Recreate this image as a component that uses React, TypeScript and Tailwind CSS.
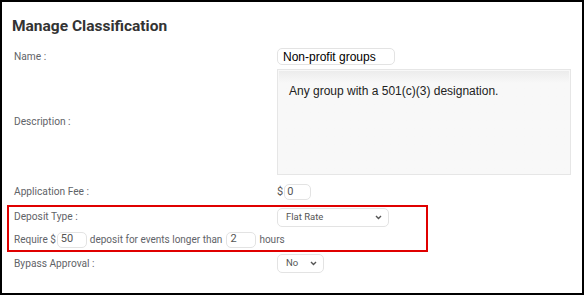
export default function App() {
  const label = "w-[263px] shrink-0 text-[10.2px] text-[#5f6368]";
  return (
    <div className="w-[584px] h-[295px] border-2 border-black bg-white overflow-hidden font-['Roboto',sans-serif]">
      <h1 className="pl-[10px] pt-[14px] text-[15.5px] font-bold text-[#333] leading-5">Manage Classification</h1>

      <div className="flex flex-col pl-[12px] mt-[12px]">
        {/* name */}
        <div className="flex items-center h-[17px]">
          <label className={label}>Name :</label>
          <input
            className="w-[118px] h-[17px] border border-[#e3e3e3] rounded-[5px] px-[5px] text-[12px] text-black font-['Liberation_Sans',Arial,sans-serif] outline-none"
            defaultValue="Non-profit groups"
          />
        </div>

        {/* description */}
        <div className="flex items-center mt-[4px]">
          <label className={label}>Description :</label>
          <div className="w-[294px] h-[106px] border border-[#e6e6e6] bg-[#f8f8f8] p-[1px]">
            <div className="w-full h-full bg-gradient-to-b from-[#ececec] to-[#f8f8f8] to-[12px] pt-[11px] pl-[10px] text-[12px] text-[#222] font-['Liberation_Sans',Arial,sans-serif]">
              Any group with a 501(c)(3) designation.
            </div>
          </div>
        </div>

        {/* application fee */}
        <div className="flex items-center mt-[9px] h-[16px]">
          <label className={label}>Application Fee :</label>
          <span className="text-[11px] text-[#555] mr-[1px]">$</span>
          <input
            className="w-[27px] h-[16px] border border-[#e3e3e3] rounded-[5px] px-[2px] text-[11px] text-[#555] outline-none"
            defaultValue="0"
          />
        </div>

        {/* deposit */}
        <div className="border-2 border-[#e00000] -ml-[7px] w-[421px] mt-[5px] h-[47px] pl-[5px]">
          <div className="flex items-center h-[20px]">
            <label className="w-[263px] shrink-0 text-[10.2px] text-[#5f6368]">Deposit Type :</label>
            <div className="relative w-[112px] h-[19px] border border-[#e3e3e3] rounded-[5px] text-[9.5px] text-[#555] flex items-center pl-[8px]">
              Flat Rate
              <svg className="absolute right-[6px] top-[6px]" width="7" height="5" viewBox="0 0 7 5">
                <path d="M1 1 L3.5 3.5 L6 1" stroke="#555" strokeWidth="1.4" fill="none" />
              </svg>
            </div>
          </div>
          <div className="flex items-center mt-[4px] text-[10px] text-[#5f6368] h-[17px]">
            <span>Require $</span>
            <input
              className="w-[30px] h-[16px] ml-[1px] border border-[#e3e3e3] rounded-[5px] px-[3px] text-[11px] text-[#555] outline-none"
              defaultValue="50"
            />
            <span className="ml-[3px]">deposit for events longer than</span>
            <input
              className="w-[30px] h-[16px] ml-[4px] border border-[#e3e3e3] rounded-[5px] px-[3px] text-[11px] text-[#555] outline-none"
              defaultValue="2"
            />
            <span className="ml-[3px]">hours</span>
          </div>
        </div>

        {/* bypass */}
        <div className="flex items-center mt-[2px] h-[19px]">
          <label className={label}>Bypass Approval :</label>
          <div className="relative w-[47px] h-[19px] border border-[#e3e3e3] rounded-[5px] text-[9.5px] text-[#555] flex items-center pl-[8px]">
            No
            <svg className="absolute right-[6px] top-[6px]" width="7" height="5" viewBox="0 0 7 5">
              <path d="M1 1 L3.5 3.5 L6 1" stroke="#555" strokeWidth="1.4" fill="none" />
            </svg>
          </div>
        </div>
      </div>
    </div>
  );
}
